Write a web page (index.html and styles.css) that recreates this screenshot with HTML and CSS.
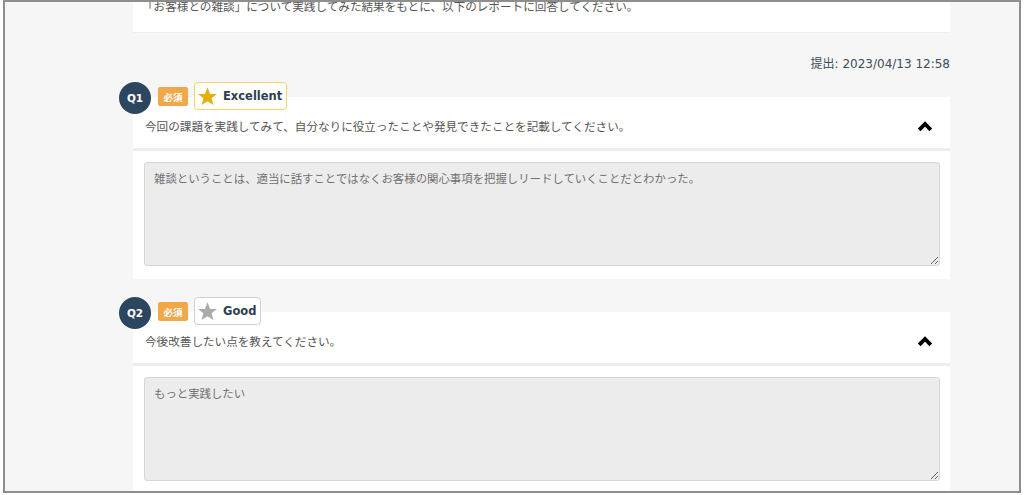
FILE: index.html
```html
<!DOCTYPE html>
<html lang="ja">
<head>
<meta charset="utf-8">
<title>レポート</title>
<link rel="stylesheet" href="styles.css">
</head>
<body>
<div class="frame">
  <div class="column">
    <div class="intro">「お客様との雑談」について実践してみた結果をもとに、以下のレポートに回答してください。</div>
    <div class="submitted">提出: 2023/04/13 12:58</div>

    <section class="q">
      <div class="q-head">
        <span class="q-num">Q1</span>
        <span class="req">必須</span>
        <span class="rating rating-gold">
          <svg class="star" viewBox="0 0 24 24" width="21" height="21"><polygon points="12,1.5 14.9,9 22.8,9.2 16.6,14.1 18.8,21.8 12,17.3 5.2,21.8 7.4,14.1 1.2,9.2 9.1,9" /></svg>
          <span class="rating-label">Excellent</span>
        </span>
      </div>
      <div class="q-card">
        <div class="q-title">
          <span>今回の課題を実践してみて、自分なりに役立ったことや発見できたことを記載してください。</span>
          <svg class="chev" viewBox="0 0 16 11" width="16" height="11"><polyline points="2.2,8.8 8,3 13.8,8.8" /></svg>
        </div>
        <div class="q-answer">
          <textarea class="answer" readonly>雑談ということは、適当に話すことではなくお客様の関心事項を把握しリードしていくことだとわかった。</textarea>
        </div>
      </div>
    </section>

    <section class="q q-next">
      <div class="q-head">
        <span class="q-num">Q2</span>
        <span class="req">必須</span>
        <span class="rating rating-gray">
          <svg class="star" viewBox="0 0 24 24" width="21" height="21"><polygon points="12,1.5 14.9,9 22.8,9.2 16.6,14.1 18.8,21.8 12,17.3 5.2,21.8 7.4,14.1 1.2,9.2 9.1,9" /></svg>
          <span class="rating-label">Good</span>
        </span>
      </div>
      <div class="q-card">
        <div class="q-title">
          <span>今後改善したい点を教えてください。</span>
          <svg class="chev" viewBox="0 0 16 11" width="16" height="11"><polyline points="2.2,8.8 8,3 13.8,8.8" /></svg>
        </div>
        <div class="q-answer">
          <textarea class="answer" readonly>もっと実践したい</textarea>
        </div>
      </div>
    </section>
  </div>
</div>
</body>
</html>
```

FILE: styles.css
```css
html, body {
  margin: 0;
  padding: 0;
  background: #ffffff;
}

body {
  font-family: "DejaVu Sans", "Noto Sans CJK JP", sans-serif;
  color: #555555;
}

.frame {
  margin: 0 3px;
  height: 493px;
  box-sizing: border-box;
  border: 2px solid #8e8e8e;
  background: #f6f6f6;
  overflow: hidden;
}

.column {
  margin: -20px 0 0 128px;
  width: 817px;
}

.intro {
  background: #ffffff;
  border-bottom: 1px solid #f7ece2;
  padding: 16px 10px 17px 9px;
  font-size: 11.6px;
  line-height: 17px;
  color: #555555;
  font-family: "Noto Sans CJK JP", sans-serif;
}

.submitted {
  margin-top: 23px;
  text-align: right;
  font-size: 12px;
  line-height: 17px;
  color: #3e4b58;
}

.q {
  margin-top: 9px;
}

.q-next {
  margin-top: 18px;
}

.q-head {
  position: relative;
  z-index: 1;
  display: flex;
  align-items: flex-start;
  gap: 6px;
  margin-left: -14px;
  height: 32px;
}

.q-num {
  width: 32px;
  height: 32px;
  border-radius: 50%;
  background: #2c4660;
  color: #ffffff;
  font-size: 10.5px;
  font-weight: bold;
  display: flex;
  align-items: center;
  justify-content: center;
  flex-shrink: 0;
}

.req {
  margin: 5px 0 0 1px;
  width: 30px;
  height: 19px;
  border-radius: 2px;
  background: #f0a84a;
  color: #ffffff;
  font-size: 9.5px;
  font-weight: bold;
  font-family: "Noto Sans CJK JP", sans-serif;
  display: flex;
  align-items: center;
  justify-content: center;
}

.rating {
  height: 28px;
  box-sizing: border-box;
  display: flex;
  align-items: center;
  gap: 5px;
  padding: 0 4px 0 2px;
  border-radius: 4px;
  background: #ffffff;
}

.rating-gold {
  border: 1.5px solid #f6d36a;
}

.rating-gray {
  border: 1.5px solid #d0d0d0;
}

.rating-gold .star polygon {
  fill: #e4af0b;
}

.rating-gray .star polygon {
  fill: #aaaaaa;
}

.rating-label {
  font-size: 11.5px;
  font-weight: bold;
  color: #2e3e4f;
}

.q-card {
  margin-top: -17px;
  background: #ffffff;
}

.q-title {
  display: flex;
  align-items: center;
  justify-content: space-between;
  padding: 21px 17px 13px 12px;
  font-size: 11.6px;
  line-height: 17px;
  color: #555555;
  font-family: "Noto Sans CJK JP", sans-serif;
  border-bottom: 3px solid #ededed;
}

.chev polyline {
  fill: none;
  stroke: #000000;
  stroke-width: 3.8;
  stroke-linejoin: miter;
}

.q-answer {
  padding: 11px 10px 13px 11px;
}

.answer {
  display: block;
  width: 100%;
  height: 104px;
  box-sizing: border-box;
  margin: 0;
  padding: 7px 9px;
  background: #ececec;
  border: 1px solid #d6d6d6;
  border-radius: 3px;
  font-family: "Noto Sans CJK JP", sans-serif;
  font-size: 11.4px;
  line-height: 17px;
  color: #707070;
  resize: vertical;
  outline: none;
}
```
